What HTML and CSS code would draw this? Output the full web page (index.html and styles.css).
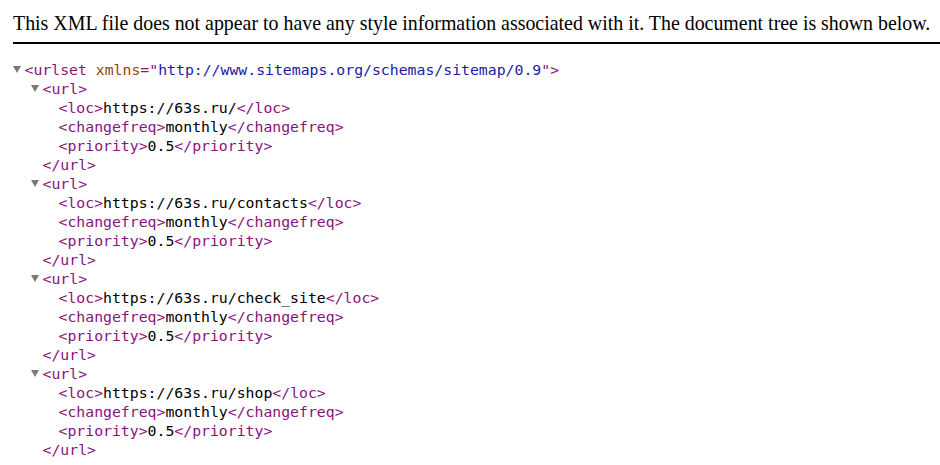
FILE: index.html
```html
<!DOCTYPE html>
<html>
<head>
<meta charset="utf-8">
<link rel="stylesheet" href="styles.css">
</head>
<body>
<div class="header">This XML file does not appear to have any style information associated with it. The document tree is shown below.</div>
<div class="tree">
  <div class="node">
    <div class="line"><span class="tri"></span><span class="tag">&lt;urlset</span> <span class="an">xmlns</span><span class="tag">="</span><span class="av">http://www.sitemaps.org/schemas/sitemap/0.9</span><span class="tag">"&gt;</span></div>
    <div class="children">
      <div class="node">
        <div class="line"><span class="tri"></span><span class="tag">&lt;url&gt;</span></div>
        <div class="children leafs">
          <div class="leaf"><span class="tag">&lt;loc&gt;</span>https://63s.ru/<span class="tag">&lt;/loc&gt;</span></div>
          <div class="leaf"><span class="tag">&lt;changefreq&gt;</span>monthly<span class="tag">&lt;/changefreq&gt;</span></div>
          <div class="leaf"><span class="tag">&lt;priority&gt;</span>0.5<span class="tag">&lt;/priority&gt;</span></div>
        </div>
        <div class="close"><span class="tag">&lt;/url&gt;</span></div>
      </div>
      <div class="node">
        <div class="line"><span class="tri"></span><span class="tag">&lt;url&gt;</span></div>
        <div class="children leafs">
          <div class="leaf"><span class="tag">&lt;loc&gt;</span>https://63s.ru/contacts<span class="tag">&lt;/loc&gt;</span></div>
          <div class="leaf"><span class="tag">&lt;changefreq&gt;</span>monthly<span class="tag">&lt;/changefreq&gt;</span></div>
          <div class="leaf"><span class="tag">&lt;priority&gt;</span>0.5<span class="tag">&lt;/priority&gt;</span></div>
        </div>
        <div class="close"><span class="tag">&lt;/url&gt;</span></div>
      </div>
      <div class="node">
        <div class="line"><span class="tri"></span><span class="tag">&lt;url&gt;</span></div>
        <div class="children leafs">
          <div class="leaf"><span class="tag">&lt;loc&gt;</span>https://63s.ru/check_site<span class="tag">&lt;/loc&gt;</span></div>
          <div class="leaf"><span class="tag">&lt;changefreq&gt;</span>monthly<span class="tag">&lt;/changefreq&gt;</span></div>
          <div class="leaf"><span class="tag">&lt;priority&gt;</span>0.5<span class="tag">&lt;/priority&gt;</span></div>
        </div>
        <div class="close"><span class="tag">&lt;/url&gt;</span></div>
      </div>
      <div class="node">
        <div class="line"><span class="tri"></span><span class="tag">&lt;url&gt;</span></div>
        <div class="children leafs">
          <div class="leaf"><span class="tag">&lt;loc&gt;</span>https://63s.ru/shop<span class="tag">&lt;/loc&gt;</span></div>
          <div class="leaf"><span class="tag">&lt;changefreq&gt;</span>monthly<span class="tag">&lt;/changefreq&gt;</span></div>
          <div class="leaf"><span class="tag">&lt;priority&gt;</span>0.5<span class="tag">&lt;/priority&gt;</span></div>
        </div>
        <div class="close"><span class="tag">&lt;/url&gt;</span></div>
      </div>
    </div>
  </div>
</div>
</body>
</html>
```
FILE: styles.css
```css
html, body {
  margin: 0;
  padding: 0;
  background: #ffffff;
  overflow: hidden;
}
.header {
  font-family: "Liberation Serif", "Times New Roman", serif;
  font-size: 19.9px;
  line-height: 23px;
  color: #000;
  padding: 12px 0 7px 0;
  border-bottom: 2px solid #000;
  margin-left: 13px;
  white-space: nowrap;
}
.tree {
  font-family: "DejaVu Sans Mono", "Liberation Mono", monospace;
  font-size: 14.8px;
  line-height: 19px;
  color: #000;
  margin-top: 16px;
  padding-left: 24.5px;
}
.line, .leaf, .close {
  height: 19px;
  white-space: pre;
}
.tri {
  display: inline-block;
  width: 0;
  height: 0;
  border-left: 4px solid transparent;
  border-right: 4px solid transparent;
  border-top: 7px solid #7a7a7a;
  margin-left: -11.5px;
  margin-right: 3.5px;
  vertical-align: 2px;
}
.children {
  padding-left: 18px;
}
.children.leafs {
  padding-left: 16px;
}
.tag { color: rgb(136, 18, 128); }
.an { color: rgb(153, 69, 0); }
.av { color: rgb(26, 26, 166); }
```
